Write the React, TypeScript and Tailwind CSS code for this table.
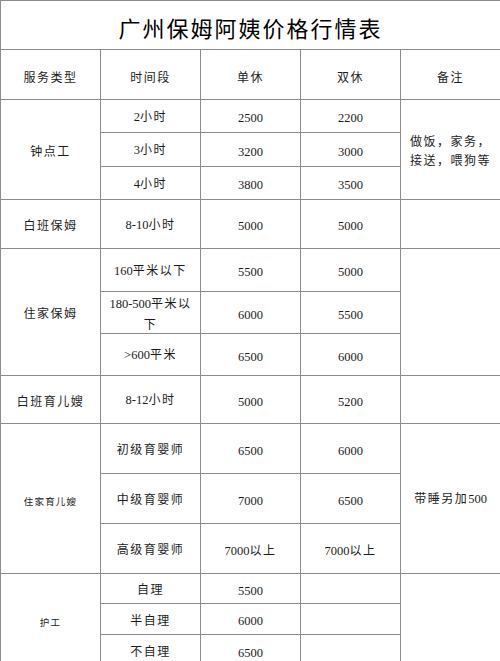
import React from "react";

// split text so Chinese runs get letter-spacing, digits stay tight
const cjk = /([\u3000-\u303f\u4e00-\u9fff\uff00-\uffef]+)/;

function Txt({ s, small }: { s: string; small?: boolean }) {
  const lines = s.split("\n");
  return (
    <>
      {lines.map((line, li) => (
        <React.Fragment key={li}>
          {li > 0 && <br />}
          {line
            .split(cjk)
            .filter(Boolean)
            .map((p, i) =>
              cjk.test(p) ? (
                <span
                  key={i}
                  className={
                    small
                      ? "font-['Noto_Sans_CJK_SC',sans-serif] text-[9.5px] tracking-[1.2px]"
                      : "font-['Noto_Sans_CJK_SC',sans-serif] text-[12px] tracking-[1.5px]"
                  }
                >
                  {p}
                </span>
              ) : (
                <span key={i} className="font-['Liberation_Serif',serif] text-[12.5px]">
                  {p}
                </span>
              )
            )}
        </React.Fragment>
      ))}
    </>
  );
}

const cell = "border border-[#8c8c8c] p-0 text-center align-middle";

interface SubRow {
  h: number;
  period: string;
  single: string;
  double: string;
}

interface Group {
  type: string;
  smallType?: boolean;
  rows: SubRow[];
  note?: string;
}

const groups: Group[] = [
  {
    type: "钟点工",
    note: "做饭，家务，\n接送，喂狗等",
    rows: [
      { h: 33, period: "2小时", single: "2500", double: "2200" },
      { h: 34, period: "3小时", single: "3200", double: "3000" },
      { h: 33, period: "4小时", single: "3800", double: "3500" },
    ],
  },
  {
    type: "白班保姆",
    rows: [{ h: 49, period: "8-10小时", single: "5000", double: "5000" }],
  },
  {
    type: "住家保姆",
    rows: [
      { h: 43, period: "160平米以下", single: "5500", double: "5000" },
      { h: 42, period: "180-500平米以\n下", single: "6000", double: "5500" },
      { h: 42, period: ">600平米", single: "6500", double: "6000" },
    ],
  },
  {
    type: "白班育儿嫂",
    rows: [{ h: 48, period: "8-12小时", single: "5000", double: "5200" }],
  },
  {
    type: "住家育儿嫂",
    smallType: true,
    note: "带睡另加500",
    rows: [
      { h: 50, period: "初级育婴师", single: "6500", double: "6000" },
      { h: 50, period: "中级育婴师", single: "7000", double: "6500" },
      { h: 50, period: "高级育婴师", single: "7000以上", double: "7000以上" },
    ],
  },
  {
    type: "护工",
    smallType: true,
    rows: [
      { h: 30, period: "自理", single: "5500", double: "" },
      { h: 31, period: "半自理", single: "6000", double: "" },
      { h: 32, period: "不自理", single: "6500", double: "" },
    ],
  },
];

export default function App() {
  return (
    <div className="h-[661px] w-[500px] overflow-hidden bg-white text-[#1c1c1c]">
      <table className="w-[500px] table-fixed border-collapse">
        <colgroup>
          <col className="w-[100px]" />
          <col className="w-[100px]" />
          <col className="w-[100px]" />
          <col className="w-[100px]" />
          <col className="w-[100px]" />
        </colgroup>
        <tbody>
          <tr className="h-[49px]">
            <td colSpan={5} className={cell + " pt-[4px]"}>
              <span className="font-['Noto_Sans_CJK_SC',sans-serif] text-[22px] font-normal tracking-[2px] text-black">
                广州保姆阿姨价格行情表
              </span>
            </td>
          </tr>
          <tr className="h-[50px]">
            {["服务类型", "时间段", "单休", "双休", "备注"].map((t) => (
              <td key={t} className={cell + " pt-[3px]"}>
                <Txt s={t} />
              </td>
            ))}
          </tr>
          {groups.map((g) =>
            g.rows.map((r, i) => (
              <tr key={g.type + i} style={{ height: r.h }}>
                {i === 0 && (
                  <td rowSpan={g.rows.length} className={cell}>
                    <Txt s={g.type} small={g.smallType} />
                  </td>
                )}
                <td className={cell + " px-[4px] leading-[19px]"}>
                  <Txt s={r.period} />
                </td>
                <td className={cell}>
                  <Txt s={r.single} />
                </td>
                <td className={cell}>
                  <Txt s={r.double} />
                </td>
                {i === 0 && (
                  <td rowSpan={g.rows.length} className={cell + " px-[8px] leading-[19px]"}>
                    {g.note ? <Txt s={g.note} /> : null}
                  </td>
                )}
              </tr>
            ))
          )}
        </tbody>
      </table>
    </div>
  );
}
